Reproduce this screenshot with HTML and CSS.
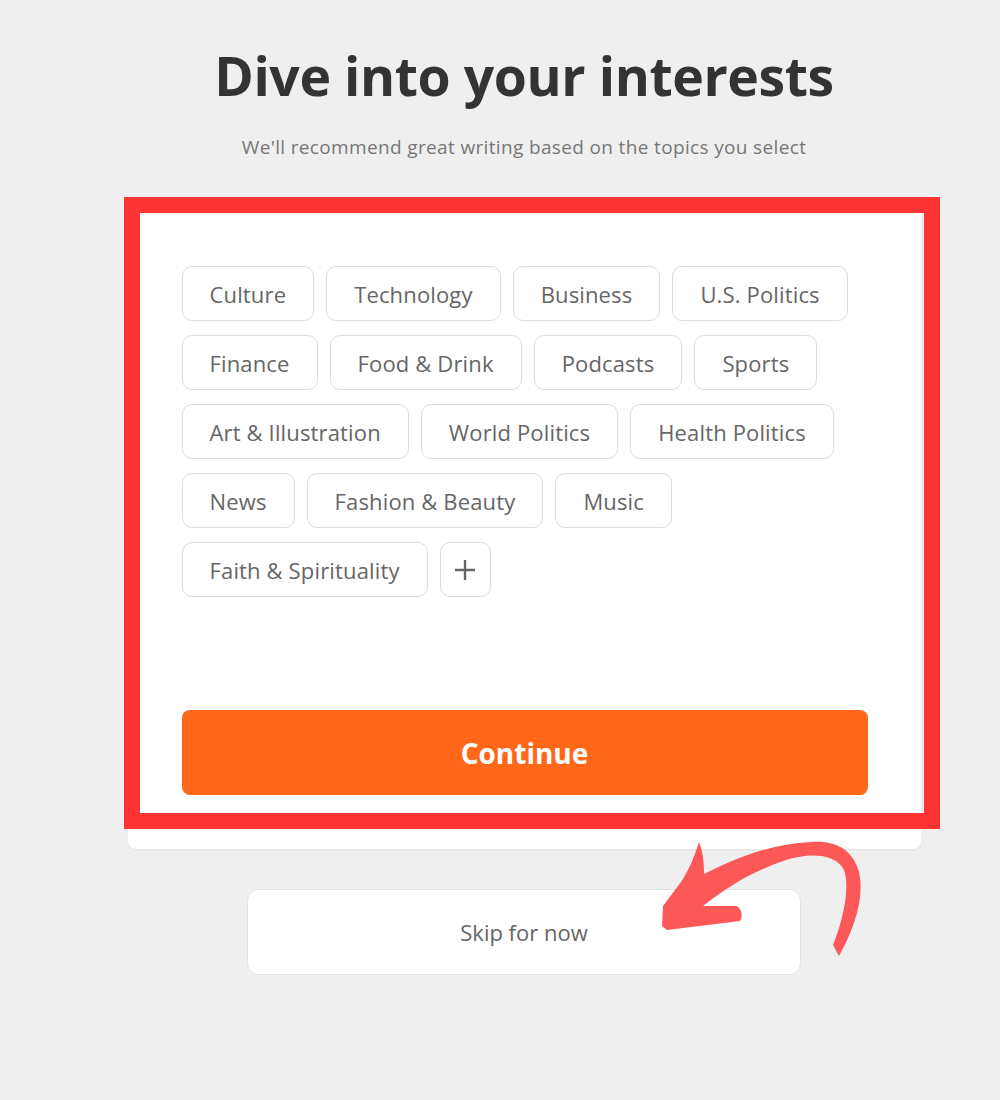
FILE: index.html
```html
<!DOCTYPE html>
<html lang="en">
<head>
    <meta charset="UTF-8">
    <title>Dive into your interests</title>
    <meta name="viewport" content="width=device-width, initial-scale=1.0">
    <link rel="stylesheet" href="styles.css">
</head>
<body>
    <div class="page">
        <h1>Dive into your interests</h1>
        <p class="subtitle">We'll recommend great writing based on the topics you select</p>

        <div class="card">
            <div class="topics">
                <button class="chip">Culture</button>
                <button class="chip">Technology</button>
                <button class="chip">Business</button>
                <button class="chip">U.S. Politics</button>
                <button class="chip">Finance</button>
                <button class="chip">Food &amp; Drink</button>
                <button class="chip">Podcasts</button>
                <button class="chip">Sports</button>
                <button class="chip">Art &amp; Illustration</button>
                <button class="chip">World Politics</button>
                <button class="chip">Health Politics</button>
                <button class="chip">News</button>
                <button class="chip">Fashion &amp; Beauty</button>
                <button class="chip">Music</button>
                <button class="chip">Faith &amp; Spirituality</button>
                <button class="chip chip-more" aria-label="More topics">
                    <svg width="22" height="22" viewBox="0 0 22 22"><path d="M11 1v20M1 11h20" stroke="#666" stroke-width="2.4" fill="none"/></svg>
                </button>
            </div>
            <button class="continue">Continue</button>
            <div class="highlight"></div>
        </div>

        <button class="skip">Skip for now</button>

        <svg class="arrow" width="240" height="150" viewBox="0 0 240 150">
            <path d="M58 12 C54 25 48 40 40 52 L22 76 L21 96 L26 100 L99 91 C102 86 101 80 96 76 L62 76 C85 58 110 42 145 30 C170 22 195 24 203 40 C210 60 200 95 192 115 L198 126 C212 100 224 70 218 42 C212 20 195 10 170 12 C130 14 95 28 63 44 C63 32 62 22 58 12 Z" fill="#fd5858"/>
        </svg>
    </div>
</body>
</html>
```

FILE: styles.css
```css
body {
    margin: 0;
    padding-left: 48px;
    background-color: #efefef;
    font-family: 'Open Sans', 'Noto Sans', sans-serif;
}
.page {
    position: relative;
    width: 793px;
    margin: 0 auto;
    padding-top: 44px;
    padding-bottom: 60px;
}
h1 {
    margin: 0;
    font-size: 53.5px;
    line-height: 64px;
    font-weight: 700;
    color: #333;
    text-align: center;
    letter-spacing: -0.4px;
}
.subtitle {
    margin: 26px 0 0;
    font-size: 19px;
    line-height: 26px;
    color: #777;
    text-align: center;
    letter-spacing: 0.35px;
}
.card {
    position: relative;
    margin-top: 45px;
    padding: 61px 53px 54px 54px;
    background-color: #fff;
    border-radius: 8px;
    box-shadow: 0 1px 2px rgba(0, 0, 0, 0.06);
}
.topics {
    display: flex;
    flex-wrap: wrap;
    gap: 14px 12px;
    min-height: 332px;
    align-content: flex-start;
}
.chip {
    height: 55px;
    padding: 0 27px;
    background-color: #fff;
    border: 1px solid #dcdcdc;
    border-radius: 10px;
    font-family: inherit;
    font-size: 22px;
    letter-spacing: 0.15px;
    color: #666;
    cursor: pointer;
}
.chip-more {
    width: 51px;
    padding: 0;
    display: flex;
    align-items: center;
    justify-content: center;
}
.continue {
    display: block;
    width: 100%;
    height: 85px;
    margin-top: 112px;
    background-color: #ff6719;
    color: #fff;
    border: none;
    border-radius: 8px;
    font-family: inherit;
    font-size: 28px;
    font-weight: 700;
    cursor: pointer;
}
.highlight {
    position: absolute;
    left: -4px;
    top: -8px;
    width: 784px;
    height: 600px;
    border: 16px solid #fe3333;
    pointer-events: none;
}
.skip {
    display: block;
    width: 554px;
    height: 86px;
    margin: 40px auto 0;
    background-color: #fff;
    border: 1px solid #e2e2e2;
    border-radius: 12px;
    font-family: inherit;
    font-size: 22px;
    color: #666;
    cursor: pointer;
}
.arrow {
    position: absolute;
    left: 513px;
    top: 830px;
}
```
